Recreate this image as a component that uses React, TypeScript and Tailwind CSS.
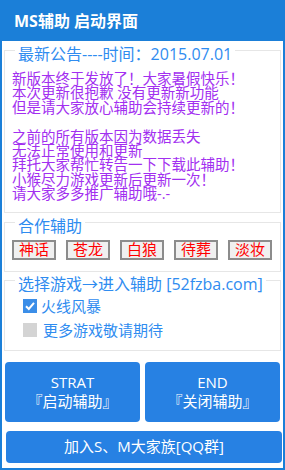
const notice = [
  "新版本终于发放了！大家暑假快乐！",
  "本次更新很抱歉 没有更新新功能",
  "但是请大家放心辅助会持续更新的！",
  "",
  "之前的所有版本因为数据丢失",
  "无法正常使用和更新",
  "拜托大家帮忙转告一下下载此辅助！",
  "小猴尽力游戏更新后更新一次！",
  "请大家多多推广辅助哦-.-",
];

const partners = ["神话", "苍龙", "白狼", "待葬", "淡妆"];

function GroupBox({
  title,
  className,
  children,
}: {
  title: string;
  className?: string;
  children: React.ReactNode;
}) {
  return (
    <fieldset className={`mx-[2px] border border-[#e6e6e6] px-[7px] ${className ?? ""}`}>
      <legend className="ml-[3px] h-[9px] px-[3px] text-[16px] leading-[16px] text-[#2f8cf0] whitespace-nowrap">
        {title}
      </legend>
      {children}
    </fieldset>
  );
}

function CheckBox({ checked }: { checked: boolean }) {
  if (!checked) return <span className="h-[14px] w-[14px] shrink-0 bg-[#d4d4d4]" />;
  return (
    <span className="flex h-[14px] w-[14px] shrink-0 items-center justify-center bg-[#3b8ee8]">
      <svg viewBox="0 0 14 14" className="h-[14px] w-[14px]">
        <path d="M3 7.2 L5.8 10 L11 3.8" fill="none" stroke="white" strokeWidth="2" />
      </svg>
    </span>
  );
}

export default function App() {
  return (
    <div className="flex h-[470px] w-[285px] flex-col bg-[#1b7fd8] px-[2px] pb-[2px] font-['Open_Sans','Noto_Sans_CJK_SC',sans-serif]">
      <div className="flex h-[41px] shrink-0 items-center pl-[12px] text-[16px] font-bold text-white">
        MS辅助 启动界面
      </div>
      <div className="flex flex-1 flex-col bg-white">
        <GroupBox title="最新公告----时间：2015.07.01" className="mt-[5px] pb-[10px]">
          <div className="pt-[17px] text-[14.5px] leading-[14.4px] text-[#a22ff0]">
            {notice.map((line, i) => (
              <div key={i} className="h-[14.4px] whitespace-nowrap">
                {line}
              </div>
            ))}
          </div>
        </GroupBox>

        <GroupBox title="合作辅助" className="mt-[5px] pb-[11px]">
          <div className="flex gap-[10px] pt-[13px]">
            {partners.map((p) => (
              <button
                key={p}
                className="flex h-[20px] w-[44px] items-center justify-center border-2 border-[#8c8c8c] bg-[#f0f0f0] text-[15px] leading-none text-[#ff0000]"
              >
                {p}
              </button>
            ))}
          </div>
        </GroupBox>

        <GroupBox title="选择游戏→进入辅助 [52fzba.com]" className="mt-[4px] pb-[13px]">
          <div className="flex flex-col gap-[10px] pt-[14px] pl-[11px] text-[15px] leading-[14px] text-[#2f8cf0]">
            <label className="flex items-center gap-[4px]">
              <CheckBox checked />
              <span>火线风暴</span>
            </label>
            <label className="flex items-center gap-[6px]">
              <CheckBox checked={false} />
              <span>更多游戏敬请期待</span>
            </label>
          </div>
        </GroupBox>

        <div className="mt-[11px] flex gap-[5px] px-[3px]">
          <button className="flex h-[60px] flex-1 flex-col items-center justify-center rounded-[4px] bg-[#2781e3] text-[15px] leading-[19px] text-white">
            <span>STRAT</span>
            <span>『启动辅助』</span>
          </button>
          <button className="flex h-[60px] flex-1 flex-col items-center justify-center rounded-[4px] bg-[#2781e3] text-[15px] leading-[19px] text-white">
            <span>END</span>
            <span>『关闭辅助』</span>
          </button>
        </div>
        <button className="mt-[9px] mr-[1px] ml-[4px] flex h-[32px] items-center justify-center rounded-[4px] bg-[#2781e3] text-[15px] text-white">
          加入S、M大家族[QQ群]
        </button>
      </div>
    </div>
  );
}
